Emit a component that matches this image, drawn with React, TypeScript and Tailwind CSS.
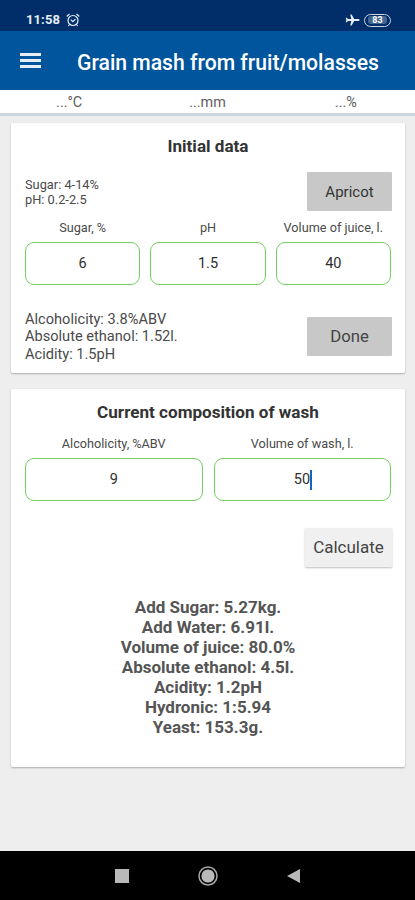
import { FC, ReactNode } from 'react';

type FieldProps = {
  label: string;
  value: string;
  focused?: boolean;
};

const Field: FC<FieldProps> = ({ label, value, focused }) => {
  return (
    <div className="flex-1">
      <div className="h-[24px] text-center text-[12.7px] leading-[20px] whitespace-nowrap text-[#4a4a4a]">{label}</div>
      <div className="flex h-[43px] items-center justify-center rounded-[9px] border-[1.5px] border-[#74cf60] pt-px text-[14.5px] text-[#303030]">
        {value}
        {focused && <span className="-mr-px h-5 w-[1.5px] bg-[#1565c0]" />}
      </div>
    </div>
  );
};

const Card: FC<{ className: string; children: ReactNode }> = ({ className, children }) => {
  return (
    <section className={`mr-[10px] ml-[11px] rounded-[2px] bg-white pr-[14px] pl-[14px] shadow-[0_1px_2px_rgba(0,0,0,0.28)] ${className}`}>
      {children}
    </section>
  );
};

const results = [
  'Add Sugar: 5.27kg.',
  'Add Water: 6.91l.',
  'Volume of juice: 80.0%',
  'Absolute ethanol: 4.5l.',
  'Acidity: 1.2pH',
  'Hydronic: 1:5.94',
  'Yeast: 153.3g.',
];

const StatusBar: FC = () => {
  return (
    <div className="flex h-[31px] items-center bg-[#012d69] pt-[9px] pr-[24px] pl-[26px] text-[#e6edf5]">
      <span className="text-[13px] leading-4 font-bold tracking-[0.1px]">11:58</span>
      <svg className="ml-[6px]" width="14" height="14" viewBox="0 0 14 14" fill="none" stroke="currentColor" strokeWidth="1.2">
        <circle cx="7" cy="7.5" r="5" />
        <path d="M4.8 6.6 6.8 8.7 9.4 6.3M.7 3.5 3.5 1M13.3 3.5 10.5 1M3.5 11.5 2.4 13M10.5 11.5l1.1 1.5" />
      </svg>
      <svg className="ml-auto" width="15" height="14" viewBox="0 0 15 14" fill="currentColor">
        <path d="M14.5 7c0-.7-.5-1-1.2-1H9.2L6.6 1.5H5.2L6.3 6H3L1.8 4.7H.6L1.4 7l-.8 2.3h1.2L3 8h3.3l-1.1 4.5h1.4L9.2 8h4.1c.7 0 1.2-.3 1.2-1Z" />
      </svg>
      <div className="ml-[4px] flex h-[13px] w-[27px] items-center justify-center rounded-full border-[1.5px] border-[#c8d5e5]">
        <span className="flex h-[8px] w-[19px] items-center justify-center rounded-[3px] bg-[#41668f] text-[9px] leading-none font-bold text-white">83</span>
      </div>
    </div>
  );
};

const App: FC = () => {
  return (
    <main className="flex h-[900px] w-[415px] flex-col overflow-hidden bg-[#eeeeee] font-[Roboto,sans-serif] text-[#4a4a4a]">
      <StatusBar />
      <header className="flex h-[59px] items-center bg-[#00559d] pl-5 text-white">
        <div className="flex w-[57px] flex-col gap-[3.5px]">
          <span className="h-[2.5px] w-[21px] bg-[#e6edf5]" />
          <span className="h-[2.5px] w-[21px] bg-[#e6edf5]" />
          <span className="h-[2.5px] w-[21px] bg-[#e6edf5]" />
        </div>
        <h1 className="mt-[5px] text-[21.15px] font-medium whitespace-nowrap">Grain mash from fruit/molasses</h1>
      </header>
      <div className="grid h-[26px] shrink-0 grid-cols-3 border-b-[3px] border-[#cdd6dd] bg-white text-center text-[14.4px] leading-[26px] text-[#606060]">
        <span>...°C</span>
        <span>...mm</span>
        <span>...%</span>
      </div>

      <Card className="mt-[7px] h-[250px] shrink-0">
        <h2 className="pt-[11px] text-center text-[17.1px] leading-6 font-bold text-[#333333]">Initial data</h2>
        <div className="mt-[14px] flex h-[39px] items-start justify-between">
          <div className="pt-[5px] text-[12.8px] leading-[15px]">
            Sugar: 4-14%
            <br />
            pH: 0.2-2.5
          </div>
          <button className="-mr-px h-[39px] w-[85px] rounded-[1px] bg-[#c8c8c8] pt-px text-[15px] text-[#333333]">Apricot</button>
        </div>
        <div className="mt-[7px] flex gap-[10px]">
          <Field label="Sugar, %" value="6" />
          <Field label="pH" value="1.5" />
          <Field label="Volume of juice, l." value="40" />
        </div>
        <div className="mt-[26px] flex justify-between">
          <div className="text-[14.6px] leading-[17.3px] whitespace-nowrap">
            Alcoholicity: 3.8%ABV
            <br />
            Absolute ethanol: 1.52l.
            <br />
            Acidity: 1.5pH
          </div>
          <button className="mt-[6px] -mr-px h-[39px] w-[85px] rounded-[1px] bg-[#c8c8c8] text-[16.7px] text-[#444444]">Done</button>
        </div>
      </Card>

      <Card className="mt-[16px] h-[378px] shrink-0">
        <h2 className="pt-[11px] text-center text-[17.1px] leading-6 font-bold text-[#333333]">Current composition of wash</h2>
        <div className="mt-[10px] flex gap-[11px]">
          <Field label="Alcoholicity, %ABV" value="9" />
          <Field label="Volume of wash, l." value="50" focused />
        </div>
        <div className="mt-[27px] flex justify-end">
          <button className="-mr-px h-[39px] w-[87px] rounded-[1px] bg-[#f0f0f0] pt-px text-[17px] text-[#444444] shadow-[0_1px_2px_rgba(0,0,0,0.25)]">Calculate</button>
        </div>
        <div className="mt-[30px] text-center text-[17px] leading-5 font-bold text-[#555555]">
          {results.map((line) => (
            <div key={line}>{line}</div>
          ))}
        </div>
      </Card>

      <nav className="mt-auto flex h-[49px] shrink-0 items-center justify-center gap-[69px] bg-black">
        <svg width="14" height="14" viewBox="0 0 14 14">
          <rect width="14" height="14" fill="#b9b9b9" />
        </svg>
        <svg width="20" height="20" viewBox="0 0 20 20">
          <circle cx="10" cy="10" r="9" fill="none" stroke="#a8a8a8" strokeWidth="1.5" />
          <circle cx="10" cy="10" r="6.6" fill="#b9b9b9" />
        </svg>
        <svg width="14" height="14" viewBox="0 0 14 14">
          <path d="M0 7 13 0v14Z" fill="#b9b9b9" />
        </svg>
      </nav>
    </main>
  );
};

export default App;
